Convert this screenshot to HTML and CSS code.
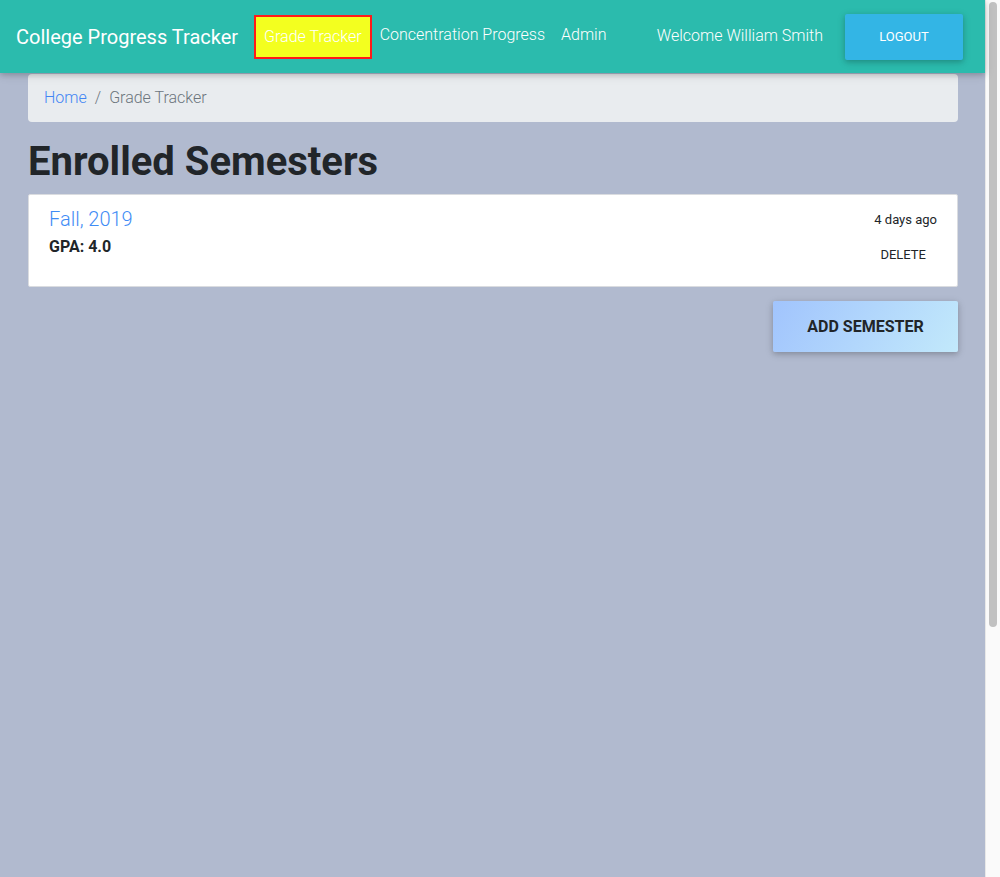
FILE: index.html
```html
<!DOCTYPE html>
<html lang="en">
<head>
<meta charset="utf-8">
<title>College Progress Tracker</title>
<link rel="stylesheet" href="styles.css">
</head>
<body>
<div class="page">
  <nav class="navbar">
    <a class="brand" href="#">College Progress Tracker</a>
    <ul class="nav-links">
      <li><a class="nav-link active" href="#">Grade Tracker</a></li>
      <li><a class="nav-link" href="#">Concentration Progress</a></li>
      <li><a class="nav-link" href="#">Admin</a></li>
    </ul>
    <div class="nav-right">
      <span class="welcome">Welcome William Smith</span>
      <button class="btn-logout">Logout</button>
    </div>
  </nav>
  <main class="container">
    <ol class="breadcrumb">
      <li><a href="#">Home</a></li>
      <li class="sep">/</li>
      <li class="current">Grade Tracker</li>
    </ol>
    <h1 class="title">Enrolled Semesters</h1>
    <div class="card">
      <div class="card-left">
        <a class="semester" href="#">Fall, 2019</a>
        <div class="gpa">GPA: 4.0</div>
      </div>
      <div class="card-right">
        <span class="ago">4 days ago</span>
        <button class="btn-delete">Delete</button>
      </div>
    </div>
    <div class="actions">
      <button class="btn-add">Add Semester</button>
    </div>
  </main>
</div>
<div class="scrollbar" aria-hidden="true"><div class="thumb"></div></div>
</body>
</html>
```

FILE: styles.css
```css
* { box-sizing: border-box; }
html, body { margin: 0; padding: 0; height: 100%; overflow: hidden; }
body {
  font-family: Roboto, "Liberation Sans", Arial, sans-serif;
  background: #b1bacf;
  color: #212529;
  display: flex;
}
a { text-decoration: none; }
button { font-family: inherit; border: 0; cursor: pointer; }

.page { flex: 1; min-width: 0; }

.scrollbar {
  width: 15px;
  flex: none;
  background: #fafafa;
  border-left: 1px solid #e8e8e8;
  padding: 2px 3px 0 3px;
}
.thumb {
  height: 625px;
  background: #c1c1c1;
  border-radius: 4px;
}

.navbar {
  display: flex;
  align-items: center;
  height: 73px;
  padding: 0 16px;
  background: #2bbbad;
  box-shadow: 0 2px 5px rgba(0,0,0,0.16), 0 2px 10px rgba(0,0,0,0.12);
  position: relative;
  z-index: 2;
}
.brand {
  color: #fff;
  font-size: 20px;
  font-weight: 400;
  margin-right: 16px;
  line-height: 30px;
}
.nav-links {
  list-style: none;
  display: flex;
  align-items: center;
  margin: 0;
  padding: 0;
}
.nav-link {
  display: block;
  color: #fff;
  font-size: 16px;
  font-weight: 300;
  padding: 6px 8px 10px;
  line-height: 24px;
}
.nav-link.active {
  background: #f3ff1f;
  border: 2px solid #ff1a1a;
  padding: 8px 8px;
  line-height: 24px;
  margin-top: 1px;
}
.nav-right {
  margin-left: auto;
  display: flex;
  align-items: center;
}
.welcome {
  color: #fff;
  font-size: 16px;
  font-weight: 300;
  margin-right: 22px;
  margin-top: -2px;
}
.btn-logout {
  background: #33b5e5;
  color: #fff;
  font-size: 13px;
  text-transform: uppercase;
  width: 118px;
  height: 46px;
  margin: 0 6px 0 0;
  border-radius: 2px;
  box-shadow: 0 2px 5px rgba(0,0,0,0.16), 0 2px 10px rgba(0,0,0,0.12);
}

.container {
  padding: 0 27px 0 28px;
}
.breadcrumb {
  list-style: none;
  display: flex;
  margin: 1px 0 0;
  padding: 12px 16px;
  background: #e9ecef;
  border-radius: 4px;
  font-size: 16px;
  font-weight: 300;
  line-height: 24px;
}
.breadcrumb a { color: #4285f4; }
.breadcrumb .sep { color: #6c757d; padding: 0 8px; }
.breadcrumb .current { color: #6c757d; }

.title {
  font-size: 40px;
  font-weight: 700;
  line-height: 48px;
  margin: 16px 0 8px;
  color: #212529;
}

.card {
  display: flex;
  justify-content: space-between;
  background: #fff;
  border: 1px solid #dadce0;
  border-radius: 2px;
  padding: 12px 20px 0 20px;
  height: 93px;
}
.card-left { display: flex; flex-direction: column; }
.semester {
  color: #3f8cf5;
  font-size: 20px;
  font-weight: 300;
  line-height: 24px;
}
.gpa {
  font-size: 16px;
  font-weight: 700;
  line-height: 20px;
  margin-top: 6px;
}
.card-right {
  display: flex;
  flex-direction: column;
  align-items: flex-end;
}
.ago {
  font-size: 13px;
  line-height: 20px;
  margin-top: 3px;
}
.btn-delete {
  background: transparent;
  font-size: 13px;
  text-transform: uppercase;
  color: #212529;
  padding: 6px 11px;
  margin-top: 11px;
  line-height: 16px;
}

.actions {
  display: flex;
  justify-content: flex-end;
  margin-top: 14px;
}
.btn-add {
  width: 185px;
  height: 51px;
  background: linear-gradient(120deg, #a1c4fd 0%, #c2e9fb 100%);
  color: #212529;
  font-size: 16px;
  font-weight: 700;
  text-transform: uppercase;
  border-radius: 2px;
  box-shadow: 0 2px 5px rgba(0,0,0,0.16), 0 2px 10px rgba(0,0,0,0.12);
}
```
